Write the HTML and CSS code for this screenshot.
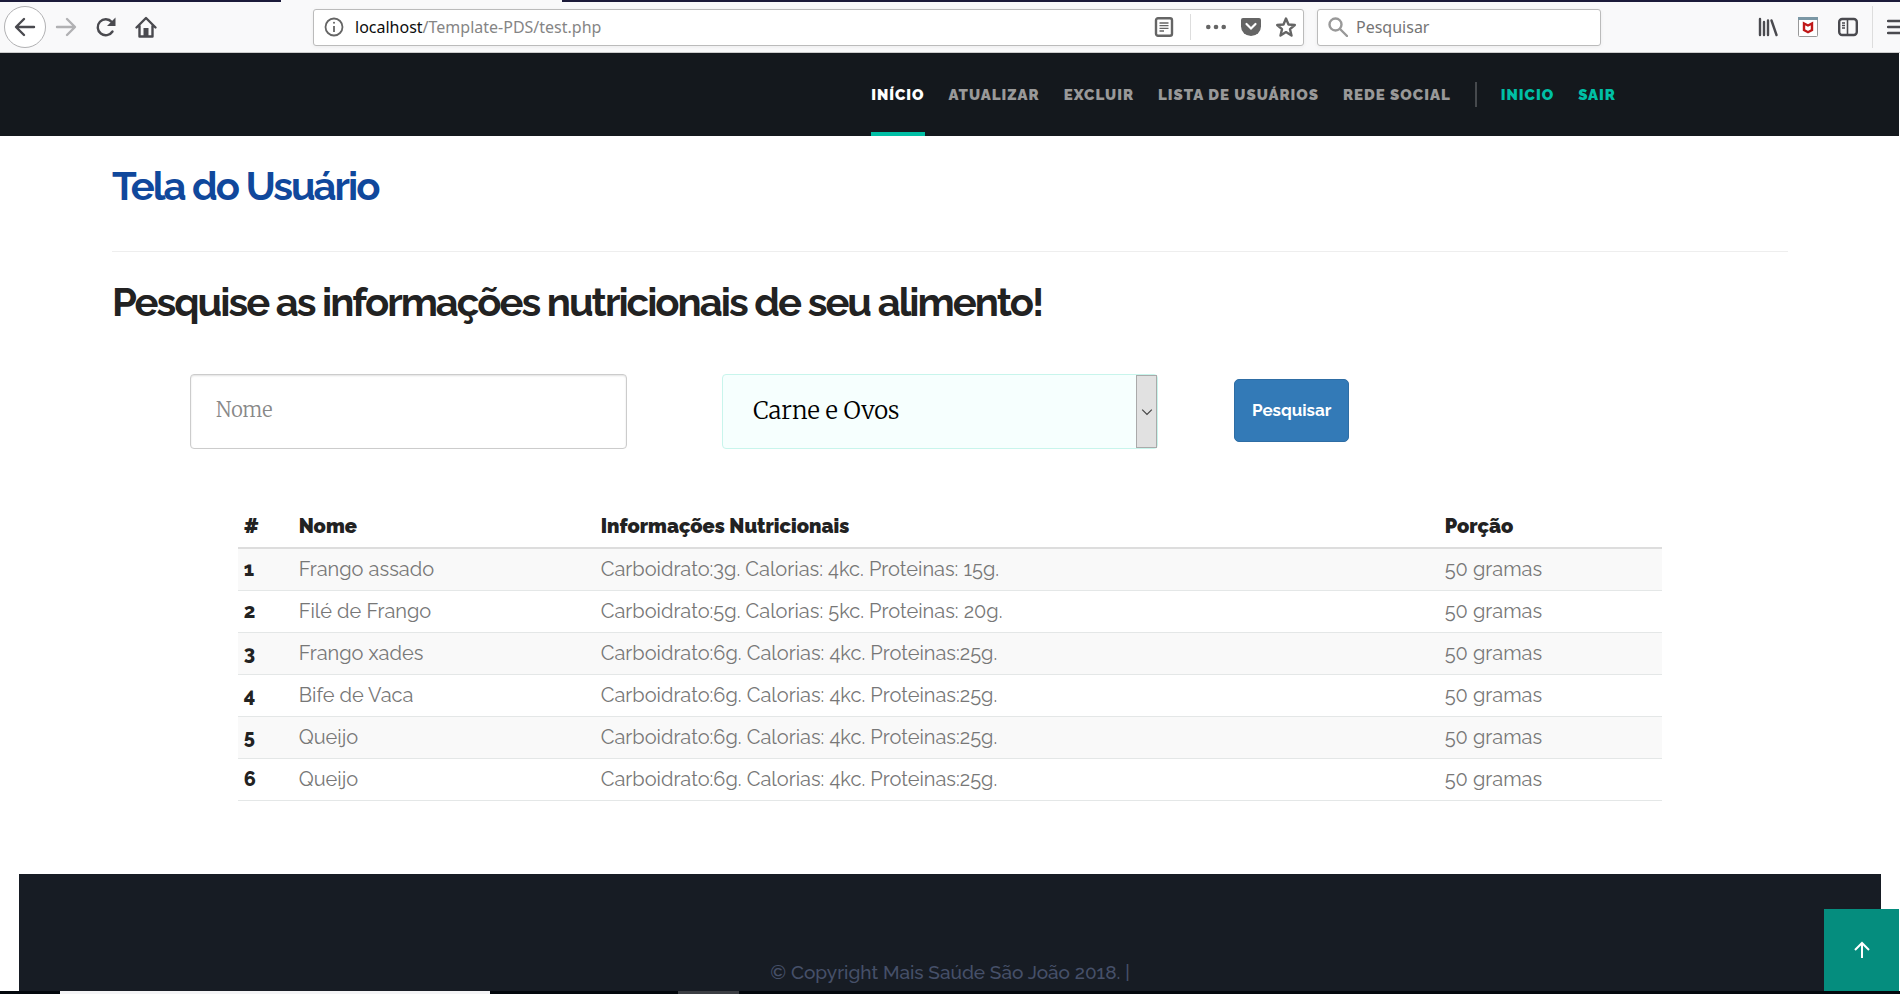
FILE: index.html
```html
<!DOCTYPE html>
<html lang="pt-BR">
<head>
<meta charset="utf-8">
<title>Tela do Usuário</title>
<link rel="stylesheet" href="styles.css">
</head>
<body>
<div class="browser">
  <div class="tabs"><span class="tab-active"></span></div>
  <div class="toolbar">
    <div class="tool-group">
      <button class="tool back" aria-label="Voltar"><svg viewBox="0 0 24 24"><path d="M11 4 3 12l8 8M3.500 12H21" class="line"/></svg></button>
      <button class="tool forward" aria-label="Avançar"><svg viewBox="0 0 24 24"><path d="M13 4l8 8-8 8M20.500 12H3" class="line"/></svg></button>
      <button class="tool" aria-label="Recarregar"><svg viewBox="0 0 24 24"><path d="M18.500 16.500A8 8 0 1 1 17.800 7" class="line"/><path d="M21.500 2.500v8.500h-8.500z" fill="currentColor"/></svg></button>
      <button class="tool" aria-label="Página inicial"><svg viewBox="0 0 24 24"><path d="M2.500 12.500 12 3l9.500 9.500M5.500 11v10.500h13V11" class="line"/><path d="M9.500 21v-8h5v8z" fill="currentColor"/></svg></button>
    </div>
    <div class="url">
      <svg class="info" viewBox="0 0 20 20"><circle cx="10" cy="10" r="8.500"/><path d="M10 9v6"/><circle cx="10" cy="5.800" r="1" fill="currentColor" stroke="none"/></svg>
      <span class="address"><span class="host">localhost</span>/Template-PDS/test.php</span>
      <svg class="reader" viewBox="0 0 20 20"><rect x="2" y="1.200" width="16" height="17.600" rx="2" class="line"/><path d="M5.500 6h9M5.500 8.700h9M5.500 11.400h9M5.500 14h4.500" stroke="currentColor" stroke-width="1.300"/></svg>
      <span class="url-rule"></span>
      <svg viewBox="0 0 20 20"><g fill="currentColor"><circle cx="2.300" cy="10" r="2.300"/><circle cx="10" cy="10" r="2.300"/><circle cx="17.700" cy="10" r="2.300"/></g></svg>
      <svg viewBox="0 0 20 20"><path d="M2 1h16a2 2 0 0 1 2 2v6.500a10 9.500 0 0 1-20 0V3a2 2 0 0 1 2-2z" fill="currentColor"/><path d="m5.500 7 4.500 4.500L14.500 7" fill="none" stroke="#fff" stroke-width="2.200" stroke-linecap="round"/></svg>
      <svg viewBox="0 0 20 20"><path d="m10 1.500 2.500 6 6.300.5-4.800 4.200 1.500 6.300-5.500-3.400-5.500 3.400L6 12.200 1.200 8l6.300-.5z" class="line"/></svg>
    </div>
    <label class="search">
      <svg viewBox="0 0 20 20"><circle cx="7.500" cy="7.500" r="6"/><path d="m12 12 7 7"/></svg>
      <input type="search" placeholder="Pesquisar" aria-label="Pesquisar na web">
    </label>
    <div class="tool-right">
      <svg viewBox="0 0 20 20"><path d="M2 2v16M6 5v13M10 3.500V18M13.500 3.500l5 14.500" class="line"/></svg>
      <svg viewBox="0 0 20 20"><rect x="0.500" y="0.500" width="19" height="19" rx="1" fill="#fff" stroke="#999"/><path d="M0 0h20v3H0z" fill="#7b97a5"/><path d="M6 6.500v6.500l4 2.200 4-2.200V6.500l-4 2z" fill="none" stroke="#c01818" stroke-width="2.400"/></svg>
      <svg viewBox="0 0 20 20"><rect x="1.200" y="2" width="17.600" height="16" rx="3" class="line"/><path d="M9.500 2v16" stroke="currentColor" stroke-width="1.600"/><path d="M4 6h3M4 8.500h3M4 11h3" stroke="currentColor" stroke-width="1.300"/></svg>
      <span class="menu-rule"></span>
      <svg viewBox="0 0 20 20"><path d="M1 4h19M1 10h19M1 16h19" class="line"/></svg>
    </div>
  </div>
</div>
<nav class="nav">
  <a class="link active" href="#">INÍCIO</a>
  <a class="link" href="#">ATUALIZAR</a>
  <a class="link" href="#">EXCLUIR</a>
  <a class="link" href="#">LISTA DE USUÁRIOS</a>
  <a class="link" href="#">REDE SOCIAL</a>
  <span class="nav-rule"></span>
  <a class="link accent" href="#">INICIO</a>
  <a class="link accent" href="#">SAIR</a>
</nav>
<main class="content">
  <h1 class="title">Tela do Usuário</h1>
  <hr class="rule">
  <h2 class="subtitle">Pesquise as informações nutricionais de seu alimento!</h2>
  <form class="form">
    <input class="name" type="text" placeholder="Nome" aria-label="Nome">
    <div class="select-wrap">
      <select class="select" aria-label="Categoria"><option>Carne e Ovos</option></select>
      <span class="arrow"><svg viewBox="0 0 10 10"><path d="m1 3 4 4 4-4"/></svg></span>
    </div>
    <button class="submit" type="button">Pesquisar</button>
  </form>
  <table class="table">
    <thead><tr><th class="c-num">#</th><th class="c-name">Nome</th><th class="c-info">Informações Nutricionais</th><th>Porção</th></tr></thead>
    <tbody>
      <tr><th>1</th><td>Frango assado</td><td>Carboidrato:3g. Calorias: 4kc. Proteinas: 15g.</td><td>50 gramas</td></tr>
      <tr><th>2</th><td>Filé de Frango</td><td>Carboidrato:5g. Calorias: 5kc. Proteinas: 20g.</td><td>50 gramas</td></tr>
      <tr><th>3</th><td>Frango xades</td><td>Carboidrato:6g. Calorias: 4kc. Proteinas:25g.</td><td>50 gramas</td></tr>
      <tr><th>4</th><td>Bife de Vaca</td><td>Carboidrato:6g. Calorias: 4kc. Proteinas:25g.</td><td>50 gramas</td></tr>
      <tr><th>5</th><td>Queijo</td><td>Carboidrato:6g. Calorias: 4kc. Proteinas:25g.</td><td>50 gramas</td></tr>
      <tr><th>6</th><td>Queijo</td><td>Carboidrato:6g. Calorias: 4kc. Proteinas:25g.</td><td>50 gramas</td></tr>
    </tbody>
  </table>
</main>
<footer class="footer"><p class="copy">© Copyright Mais Saúde São João 2018. |</p></footer>
<a class="to-top" href="#" aria-label="Voltar ao topo"><svg viewBox="0 0 18 18"><path d="M9 17V2M2 9l7-7 7 7"/></svg></a>
<div class="taskbar"><span class="task-a"></span><span class="task-b"></span></div>
</body>
</html>
```
FILE: styles.css
```css
* { box-sizing: border-box; }
body {
  margin: 0;
  min-height: 100vh;
  display: flex;
  flex-direction: column;
  overflow: hidden;
  background: #fff;
  color: #222;
  font-family: Raleway, Lato, sans-serif;
  font-size: 20px;
}
svg { display: block; flex: none; width: 20px; height: 20px; }
.line { fill: none; stroke: currentColor; stroke-width: 2.4; stroke-linecap: round; stroke-linejoin: round; }

.browser { background: #f9f9fa; border-bottom: 1px solid #ccc; color: #4a4a4f; }
.tabs { height: 2px; background: #1c1b3a; }
.tab-active { display: block; width: 281px; height: 2px; margin-left: 281px; background: #f9f9fa; }
.toolbar { display: flex; align-items: center; height: 50px; overflow: hidden; font-family: "Noto Sans", sans-serif; font-size: 16px; }
.tool-group { display: flex; align-items: center; width: 313px; padding-left: 4px; flex: none; }
.tool { display: flex; align-items: center; justify-content: center; width: 40px; height: 42px; padding: 0; border: 0; background: none; color: #4a4a4f; }
.tool svg { width: 24px; height: 24px; }
.back { width: 42px; border: 1px solid #b1b1b3; border-radius: 50%; background: #fff; }
.forward { color: #b1b1b3; }
.url, .search { display: flex; align-items: center; height: 37px; border: 1px solid #bbb; border-radius: 3px; background: #fff; box-shadow: 0 1px 4px rgba(0, 0, 0, .06); }
.url { flex: 1; padding: 0 7px 0 10px; gap: 15px; color: #656565; }
.address { flex: 1; margin-left: -4px; color: #858585; }
.host { color: #0c0c0d; }
.info, .search svg { fill: none; stroke: currentColor; stroke-width: 1.8; }
.reader { margin-right: 1px; }
.url-rule { width: 1px; height: 26px; background: #ddd; }
.search { flex: none; width: 284px; margin-left: 13px; padding: 0 10px; gap: 8px; color: #999; }
.search svg { stroke-width: 2.4; stroke-linecap: round; }
.search input { flex: 1; min-width: 0; border: 0; padding: 0; background: none; font: inherit; }
.search input::placeholder { color: #757575; opacity: 1; }
.tool-right { display: flex; align-items: center; flex: none; width: 299px; padding-left: 157px; gap: 20px; }
.menu-rule { flex: none; width: 1px; height: 42px; margin-right: -6px; margin-left: -6px; background: #ddd; }

.nav { display: flex; justify-content: flex-end; gap: 24px; height: 83px; margin-right: 1px; padding-right: 283px; background: #14181d; }
.link { display: flex; align-items: center; border-bottom: 4px solid transparent; border-top: 4px solid transparent; color: #999; font-size: 15px; font-weight: 900; letter-spacing: 1px; text-decoration: none; }
.active { border-bottom-color: #00bfa5; color: #fff; }
.accent { color: #00bfa5; }
.nav-rule { align-self: center; width: 2px; height: 25px; background: #46494d; }

.content { padding: 28px 112px 0; }
.title, .subtitle { margin: 0; font-size: 40px; line-height: 44px; font-weight: 700; letter-spacing: -2px; }
.title { color: #10489c; }
.rule { margin: 43px 0 28px; border: 0; border-top: 1px solid #eee; }
.form { display: flex; align-items: center; margin: 50px 0 0; padding-left: 78px; font-family: Merriweather, "DejaVu Serif", serif; font-weight: 300; }
.name { width: 437px; height: 75px; padding: 0 25px 4px; border: 1px solid #ccc; border-radius: 4px; box-shadow: inset 0 1px 2px rgba(0, 0, 0, .12); font-family: inherit; font-weight: inherit; font-size: 20px; color: #555; }
.name::placeholder { color: #888; opacity: 1; }
.select-wrap { position: relative; width: 436px; margin-left: 95px; }
.select { display: block; width: 100%; height: 75px; padding: 0 30px 2px; appearance: none; border: 1px solid #c8f5ec; border-radius: 4px; background: #f6fffe; color: #000; font-family: inherit; font-weight: inherit; font-size: 24px; }
.arrow { position: absolute; top: 1px; right: 1px; bottom: 1px; display: flex; align-items: center; justify-content: center; width: 21px; border: 1px solid #aaa; background: #e1e1e1; pointer-events: none; }
.arrow svg { width: 12px; height: 12px; fill: none; stroke: #444; }
.submit { height: 63px; margin: 0 0 2px 76px; padding: 0 17px 2px; border: 1px solid #2e6da4; border-radius: 5px; background: #337ab7; color: #fff; font-family: Raleway, Lato, sans-serif; font-size: 17px; font-weight: 700; }

.table { width: 85%; margin: 56px auto 0; border-collapse: collapse; line-height: 25px; text-align: left; }
.table th, .table td { padding: 8px 6px; border-bottom: 1px solid #e4e7e7; }
.table td { color: #777; }
.table thead th { padding: 9px 6px 8px; border-bottom: 2px solid #ddd; font-weight: 900; }
.table tbody th { font-weight: 800; }
.table tbody tr:nth-child(odd) { background: #f9f9f9; }
.c-num { width: 55px; }
.c-name { width: 302px; }
.c-info { width: 844px; }

.footer { flex: 1; margin: 73px 1% 0; padding: 85px 0 30px; background: #171c24; text-align: center; }
.copy { margin: 0; color: #465069; font-size: 19px; line-height: 26px; font-weight: 500; }
.to-top { position: fixed; right: 1px; bottom: 3px; display: flex; align-items: center; justify-content: center; width: 75px; height: 82px; background: #058d7e; }
.to-top svg { width: 18px; height: 18px; fill: none; stroke: #fff; stroke-width: 2; }
.taskbar { position: fixed; left: 0; right: 0; bottom: 0; display: flex; height: 3px; background: #03080d; }
.task-a { width: 430px; margin-left: 60px; background: #f4f4f6; }
.task-b { width: 61px; margin-left: 188px; background: #3b3e43; }
```
